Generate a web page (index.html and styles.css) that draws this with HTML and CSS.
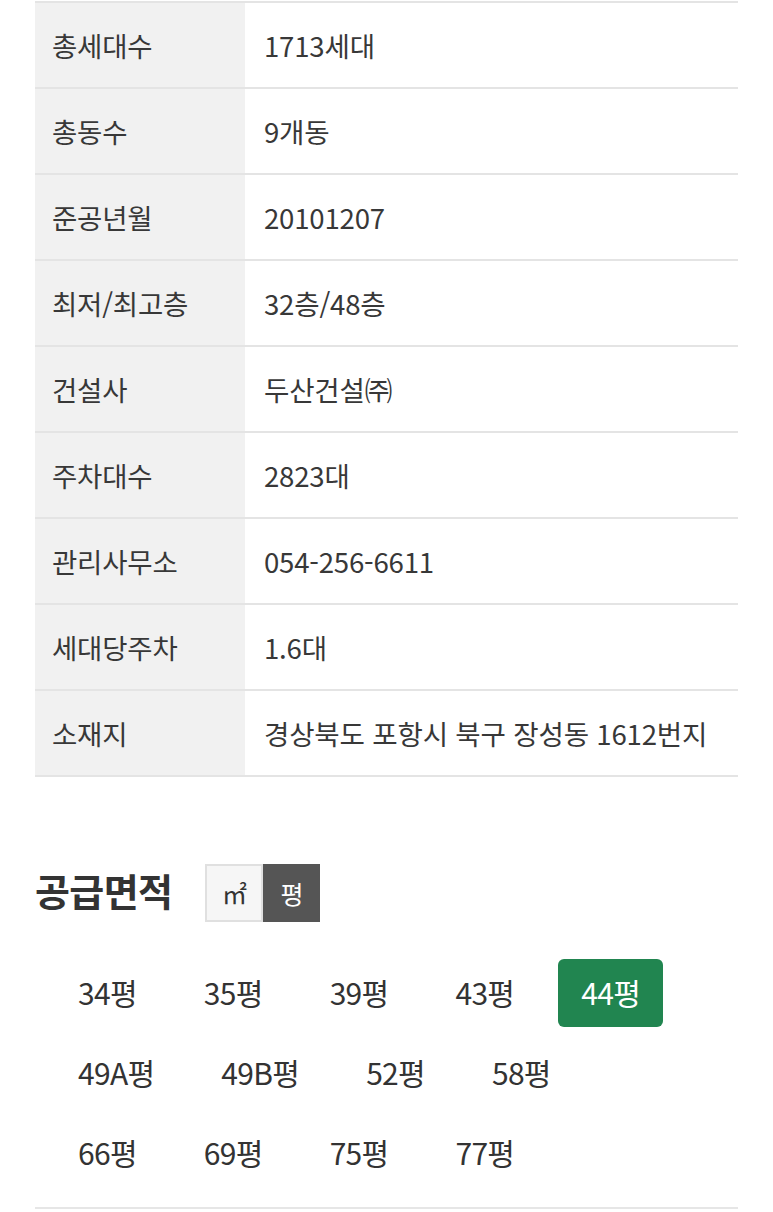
FILE: index.html
```html
<!DOCTYPE html>
<html lang="ko">
<head>
<meta charset="utf-8">
<link rel="stylesheet" href="styles.css">
</head>
<body>
<div class="page">
  <table class="info">
    <tr><th>총세대수</th><td>1713세대</td></tr>
    <tr><th>총동수</th><td>9개동</td></tr>
    <tr><th>준공년월</th><td>20101207</td></tr>
    <tr><th>최저/최고층</th><td>32층/48층</td></tr>
    <tr><th>건설사</th><td>두산건설㈜</td></tr>
    <tr><th>주차대수</th><td>2823대</td></tr>
    <tr><th>관리사무소</th><td>054-256-6611</td></tr>
    <tr><th>세대당주차</th><td>1.6대</td></tr>
    <tr><th>소재지</th><td>경상북도 포항시 북구 장성동 1612번지</td></tr>
  </table>

  <div class="area-head">
    <h2 class="area-title">공급면적</h2>
    <div class="unit-toggle">
      <span class="unit">㎡</span>
      <span class="unit active">평</span>
    </div>
  </div>

  <div class="chips">
    <span class="chip">34평</span>
    <span class="chip">35평</span>
    <span class="chip">39평</span>
    <span class="chip">43평</span>
    <span class="chip selected">44평</span>
    <span class="chip">49A평</span>
    <span class="chip">49B평</span>
    <span class="chip">52평</span>
    <span class="chip">58평</span>
    <span class="chip">66평</span>
    <span class="chip">69평</span>
    <span class="chip">75평</span>
    <span class="chip">77평</span>
  </div>
</div>
</body>
</html>
```

FILE: styles.css
```css
* { box-sizing: border-box; }
html, body { margin: 0; padding: 0; background: #fff; }
body {
  font-family: "Noto Sans CJK KR", "Noto Sans", sans-serif;
  color: #333;
}
.page {
  padding: 0 35px;
}
.info {
  width: 100%;
  border-collapse: collapse;
  border-top: 2px solid #e4e4e4;
  margin-top: 1px;
}
.info tr {
  height: 86px;
  border-bottom: 2px solid #e4e4e4;
}
.info th, .info td {
  padding: 0;
  font-size: 27.5px;
  font-weight: 400;
  text-align: left;
  vertical-align: middle;
  color: #383838;
  letter-spacing: -0.2px;
}
.info th {
  width: 210px;
  background: #f1f1f1;
  padding-left: 17px;
}
.info td {
  font-size: 27.6px;
  padding-left: 19px;
  background: #fff;
}
.area-head {
  display: flex;
  align-items: flex-start;
  gap: 33px;
  margin-top: 87px;
}
.area-title {
  margin: 0;
  font-size: 38px;
  font-weight: 700;
  color: #333;
  line-height: 52px;
  letter-spacing: -0.6px;
}
.unit-toggle {
  display: flex;
}
.unit {
  width: 58px;
  height: 58px;
  display: flex;
  align-items: center;
  justify-content: center;
  font-size: 25px;
  background: #f6f6f6;
  border: 2px solid #e0e0e0;
  color: #333;
}
.unit.active {
  background: #555;
  border-color: #555;
  color: #fff;
  width: 57px;
}
.chips {
  display: flex;
  flex-wrap: wrap;
  column-gap: 21px;
  row-gap: 12px;
  padding: 37px 60px 20px 20px;
  border-bottom: 2px solid #e6e6e6;
}
.chip {
  display: inline-flex;
  align-items: center;
  height: 68px;
  padding: 0 23px 3px;
  font-size: 30px;
  color: #333;
  border-radius: 6px;
  letter-spacing: -0.7px;
}
.chip.selected {
  background: #218550;
  color: #fff;
}
```
